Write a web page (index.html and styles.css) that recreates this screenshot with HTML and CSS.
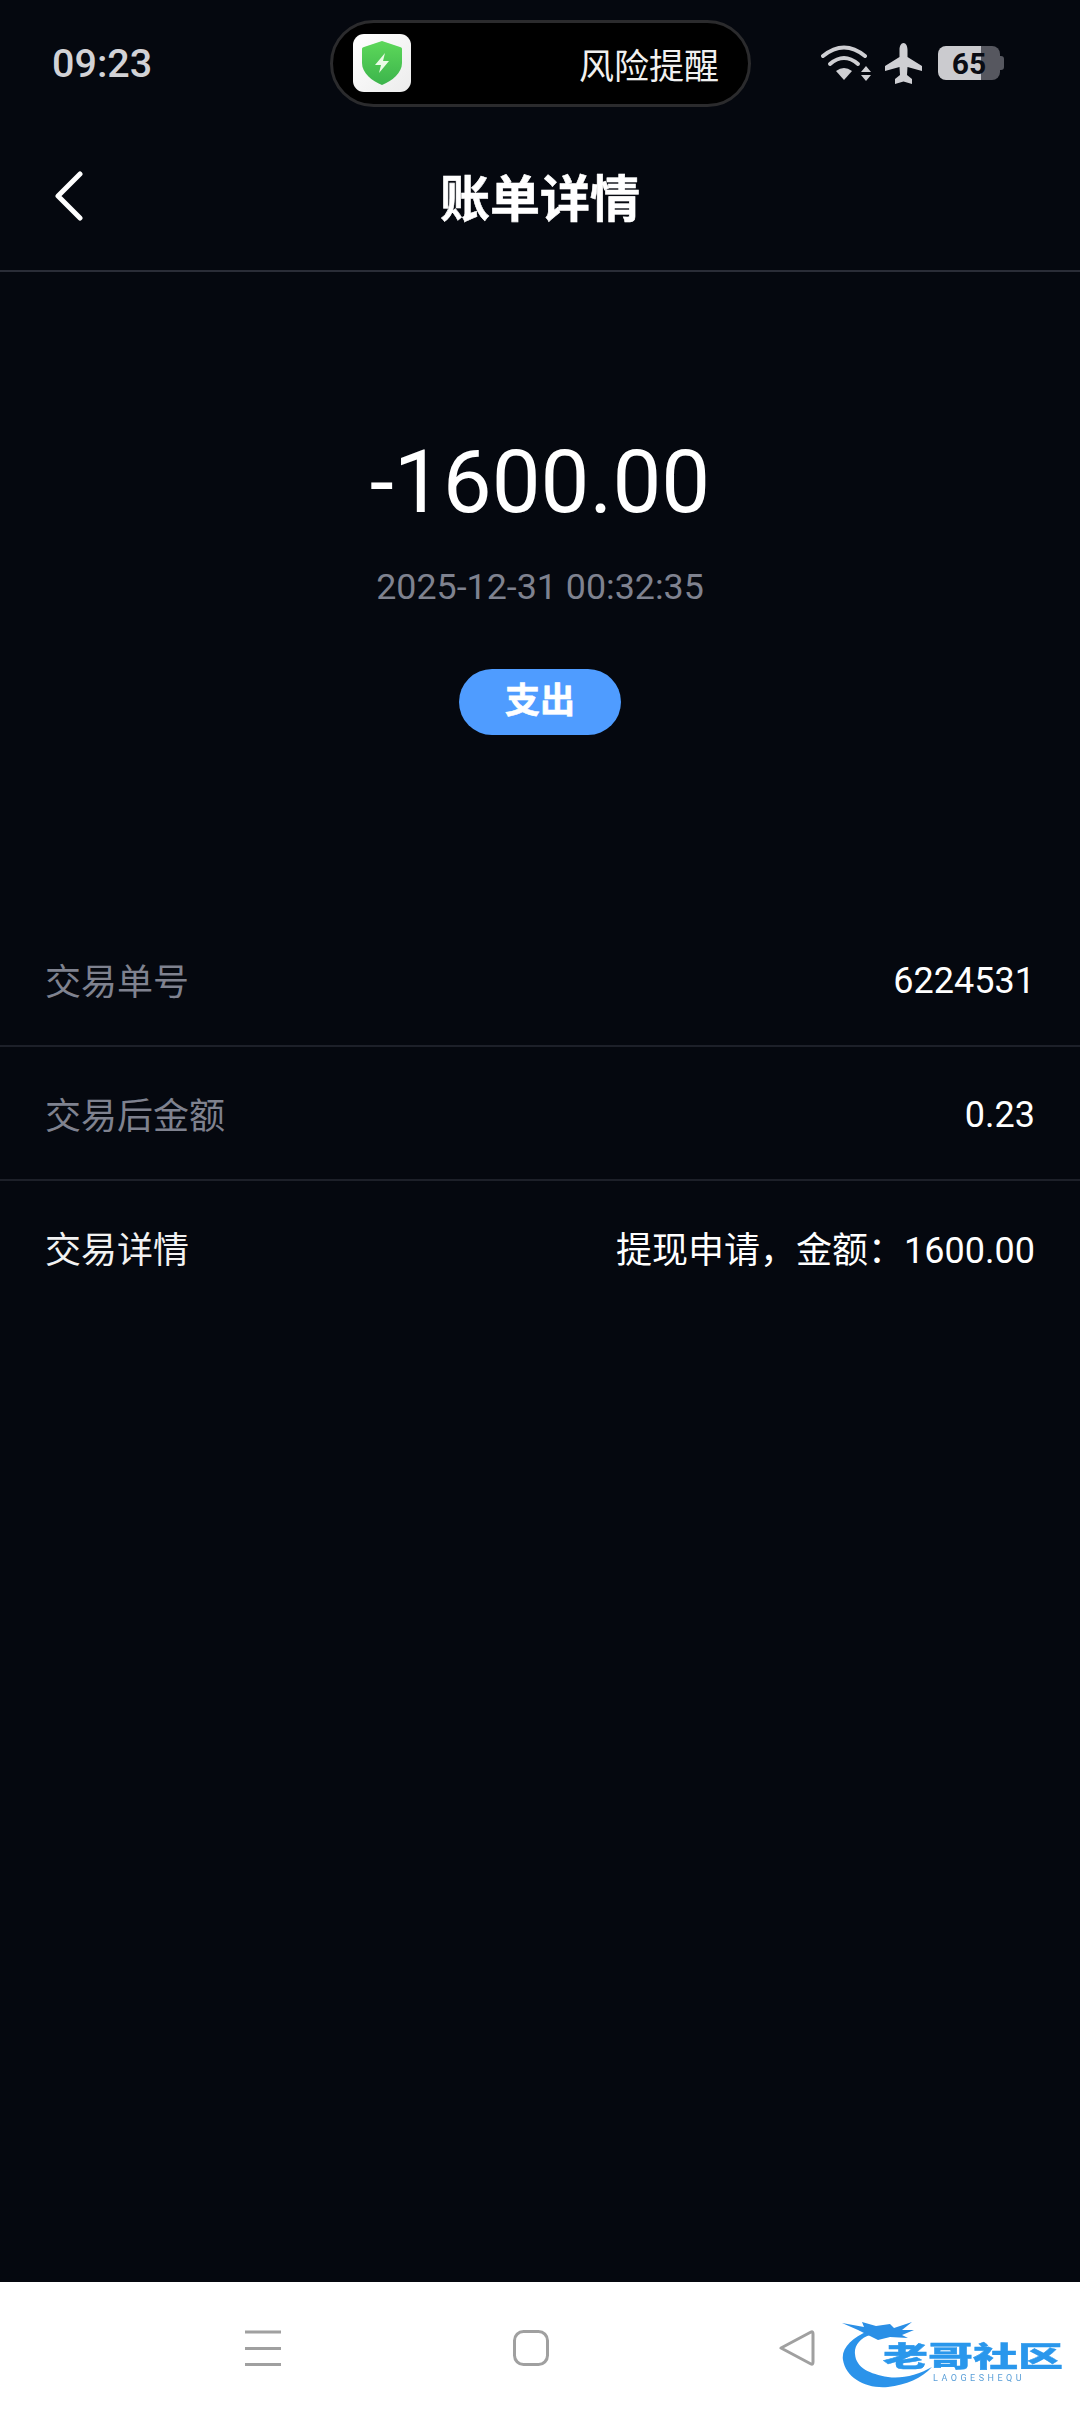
FILE: index.html
```html
<!DOCTYPE html>
<html>
<head>
  <meta charset="utf-8">
  <title>账单详情</title>
  <link rel="stylesheet" href="styles.css">
</head>
<body>
  <div class="screen">
    <div class="status-bar">
      <div class="time">09:23</div>
      <div class="island">
        <div class="app-icon">
          <svg width="40" height="44" viewBox="0 0 40 44">
            <defs>
              <linearGradient id="shieldFill" x1="0" y1="0" x2="0" y2="1">
                <stop offset="0" stop-color="#5dd85a"/>
                <stop offset="1" stop-color="#3cb44c"/>
              </linearGradient>
            </defs>
            <path d="M20 0 L38 6 C40 6.500 40 7 40 9 L40 22 C40 32 30 40 20 44 C10 40 0 32 0 22 L0 9 C0 7 0 6.500 2 6 Z" fill="url(#shieldFill)"/>
            <path d="M23 12 L13 24 L19 24 L17 32 L27 20 L21 20 Z" fill="#eafbe6"/>
          </svg>
        </div>
        <div class="island-text">风险提醒</div>
      </div>
      <div class="status-icons">
        <svg class="wifi" width="50" height="37" viewBox="0 0 50 37">
          <g fill="none" stroke="#cfcfd3" stroke-width="4" stroke-linecap="round">
            <path d="M2 11 Q23 -6 44 11"/>
            <path d="M9 19 Q23 7 37 19"/>
          </g>
          <path d="M15 26 Q23 20 31 26 L23 35 Z" fill="#cfcfd3"/>
          <path d="M40 27 L45 21 L50 27 Z M40 30 L50 30 L45 36 Z" fill="#cfcfd3"/>
        </svg>
        <svg class="plane" width="37" height="41" viewBox="0 0 37 41">
          <path d="M18.500 0 C21 0 22.500 3 22.500 7 L22.500 14 L37 23 L37 28 L22.500 24 L22 32 L27 36 L27 41 L18.500 38.500 L10 41 L10 36 L15 32 L14.500 24 L0 28 L0 23 L14.500 14 L14.500 7 C14.500 3 16 0 18.500 0 Z" fill="#cfcfd3"/>
        </svg>
        <div class="battery">65</div>
      </div>
    </div>

    <div class="header">
      <svg class="back" width="28" height="50" viewBox="0 0 28 50">
        <path d="M25 3 L3 25 L25 47" fill="none" stroke="#fff" stroke-width="5" stroke-linecap="round" stroke-linejoin="round"/>
      </svg>
      <div class="title">账单详情</div>
    </div>

    <div class="summary">
      <div class="amount">-1600.00</div>
      <div class="date">2025-12-31 00:32:35</div>
      <div class="tag">支出</div>
    </div>

    <div class="rows">
      <div class="row">
        <span class="row-label">交易单号</span>
        <span class="row-value row-num">6224531</span>
      </div>
      <div class="row">
        <span class="row-label">交易后金额</span>
        <span class="row-value row-num">0.23</span>
      </div>
      <div class="row row-last">
        <span class="row-label row-label-light">交易详情</span>
        <span class="row-value">提现申请，金额：1600.00</span>
      </div>
    </div>

    <div class="nav-bar">
      <svg width="36" height="36" viewBox="0 0 36 36">
        <path d="M0 2 H36 M0 18.500 H36 M0 34.500 H36" stroke="#a0a0a0" stroke-width="3"/>
      </svg>
      <svg width="36" height="36" viewBox="0 0 36 36">
        <rect x="1.500" y="1.500" width="33" height="33" rx="9" fill="none" stroke="#a0a0a0" stroke-width="3"/>
      </svg>
      <svg class="nav-back" width="36" height="36" viewBox="0 0 36 36">
        <path d="M2 18 L32 2 Q34 1 34 4 L34 32 Q34 35 32 34 Z" fill="none" stroke="#a0a0a0" stroke-width="3" stroke-linejoin="round"/>
      </svg>

      <div class="watermark">
        <svg class="dragon" width="100" height="72" viewBox="0 0 100 72">
          <path d="M28 13 C12 20 1 30 3 42 C6 60 26 71 48 69 C66 67 82 60 92 49 C78 57 62 61 48 59 C30 56 16 50 15 36 C14 28 20 20 30 17 Z" fill="#2b93ea"/>
          <path d="M2 5 L24 9 L22 4 L36 8 L50 6 L54 10 L72 4 L62 12 L74 12 L62 17 L68 20 L50 19 L38 22 L28 17 L18 12 Z" fill="#2a8fe6"/>
        </svg>
        <div class="wm-text">老哥社区</div>
        <div class="wm-sub">LAOGESHEQU</div>
      </div>
    </div>
  </div>
</body>
</html>
```

FILE: styles.css
```css
* {
  box-sizing: border-box;
}

body {
  margin: 0;
  padding: 0;
  font-family: Roboto, "Noto Sans CJK SC", sans-serif;
  background-color: #05080f;
}

.screen {
  display: flex;
  flex-direction: column;
  width: 1080px;
  height: 2414px;
  overflow: hidden;
  background-color: #05080f;
}

.status-bar {
  display: flex;
  align-items: center;
  height: 126px;
  padding-left: 52px;
  flex-shrink: 0;
}

.time {
  width: 278px;
  font-size: 39.5px;
  font-weight: 500;
  color: #d2d2d6;
}

.island {
  display: flex;
  align-items: center;
  justify-content: space-between;
  width: 421px;
  height: 87px;
  padding: 0 29px 0 20px;
  background-color: #000;
  border: 3px solid #2b2b2d;
  border-radius: 44px;
}

.app-icon {
  display: flex;
  align-items: center;
  justify-content: center;
  width: 58px;
  height: 58px;
  background: linear-gradient(135deg, #ffffff, #ececec);
  border-radius: 11px;
}

.island-text {
  font-size: 35px;
  color: #f0f0f0;
}

.status-icons {
  display: flex;
  align-items: center;
  margin-left: 70px;
}

.plane {
  margin-left: 14px;
}

.battery {
  position: relative;
  width: 62px;
  height: 34px;
  margin-left: 16px;
  font-size: 30px;
  font-weight: 700;
  line-height: 35px;
  text-align: center;
  color: #0a0c14;
  background: linear-gradient(90deg, #cbcbcf 43px, #56575f 43px);
  border-radius: 8px;
}

.battery::after {
  content: "";
  position: absolute;
  left: 62px;
  top: 10px;
  width: 4px;
  height: 14px;
  background-color: #56575f;
  border-radius: 0 3px 3px 0;
}

.header {
  position: relative;
  display: flex;
  align-items: center;
  justify-content: center;
  height: 146px;
  padding-bottom: 7px;
  border-bottom: 2px solid #2a2d37;
  flex-shrink: 0;
}

.back {
  position: absolute;
  left: 55px;
  top: 45px;
}

.title {
  font-size: 50px;
  font-weight: 700;
  color: #fff;
  -webkit-text-stroke: 0.6px #fff;
}

.summary {
  display: flex;
  flex-direction: column;
  align-items: center;
  height: 641px;
  padding-top: 158px;
  flex-shrink: 0;
}

.amount {
  font-size: 87px;
  line-height: 104px;
  color: #fff;
}

.date {
  margin-top: 32px;
  font-size: 35.8px;
  line-height: 42px;
  color: #7f828f;
}

.tag {
  width: 162px;
  height: 66px;
  margin-top: 61px;
  font-size: 35px;
  font-weight: 700;
  line-height: 66px;
  text-align: center;
  color: #fff;
  background-color: #4f9cff;
  border-radius: 33px;
  -webkit-text-stroke: 0.6px #fff;
}

.rows {
  flex: 1;
}

.row {
  display: flex;
  align-items: center;
  justify-content: space-between;
  height: 134px;
  padding: 0 45px;
  font-size: 36px;
  border-bottom: 2px solid #1d2029;
}

.row-last {
  border-bottom-color: transparent;
}

.row-label {
  color: #7f828f;
}

.row-label-light {
  color: #f2f2f2;
}

.row-value {
  color: #fff;
}

.row-num {
  padding-top: 3px;
}

.nav-bar {
  position: relative;
  display: flex;
  align-items: center;
  gap: 232px;
  height: 132px;
  padding: 0 0 0 245px;
  background-color: #fff;
  flex-shrink: 0;
}

.nav-back {
  margin-left: -2px;
}

/* site logo stamped over the corner of the screenshot */
.watermark {
  position: absolute;
  left: 840px;
  top: 36px;
  width: 225px;
  height: 72px;
  filter: blur(0.6px);
}

.dragon {
  position: absolute;
  left: 0;
  top: 0;
}

.wm-text {
  position: absolute;
  left: 43px;
  top: 17px;
  font-family: "Noto Sans CJK SC", sans-serif;
  font-size: 45px;
  font-weight: 900;
  line-height: 40px;
  white-space: nowrap;
  color: #2a97ec;
  -webkit-text-stroke: 0.6px #2a97ec;
  transform: scaleY(0.62);
}

.wm-sub {
  position: absolute;
  left: 93px;
  top: 55px;
  font-size: 9px;
  line-height: 10px;
  letter-spacing: 3.5px;
  white-space: nowrap;
  color: #5a9fd8;
}
```
